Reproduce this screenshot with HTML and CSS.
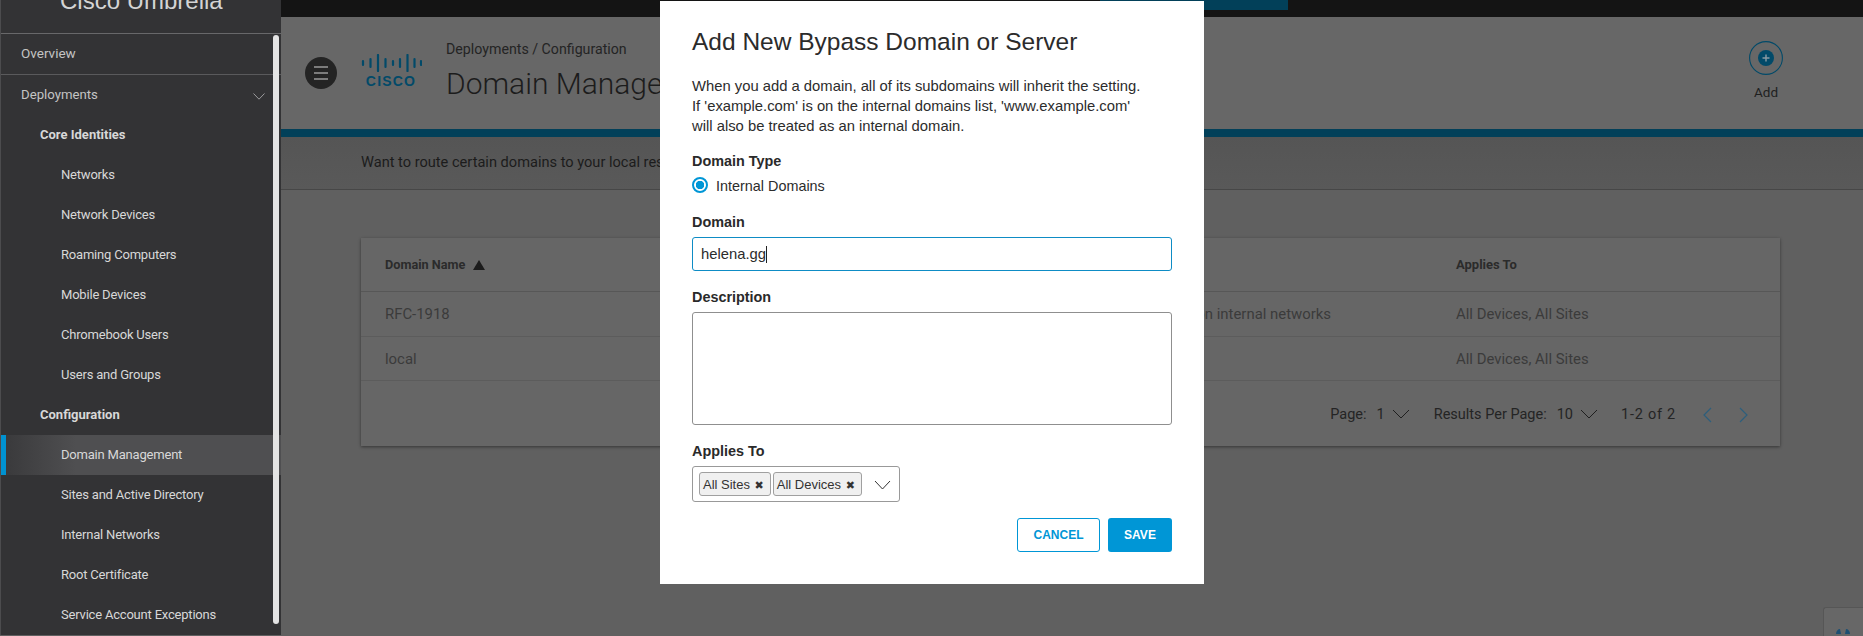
FILE: index.html
```html
<!DOCTYPE html>
<html lang="en">
<head>
<meta charset="utf-8">
<title>Domain Management</title>
<link rel="stylesheet" href="styles.css">
</head>
<body>
<div class="app">
  <aside class="sidebar">
    <div class="brand"><span>Cisco Umbrella</span></div>
    <div class="nav-top">Overview</div>
    <div class="nav-group">
      <span>Deployments</span>
      <svg class="nav-chev" width="12" height="7" viewBox="0 0 12 7"><path d="M.5.5L6 6.200 11.500.5" fill="none" stroke="#9a9a9c" stroke-width="1"/></svg>
    </div>
    <div class="nav-head">Core Identities</div>
    <div class="nav-item">Networks</div>
    <div class="nav-item">Network Devices</div>
    <div class="nav-item">Roaming Computers</div>
    <div class="nav-item">Mobile Devices</div>
    <div class="nav-item">Chromebook Users</div>
    <div class="nav-item">Users and Groups</div>
    <div class="nav-head">Configuration</div>
    <div class="nav-item active">Domain Management</div>
    <div class="nav-item">Sites and Active Directory</div>
    <div class="nav-item">Internal Networks</div>
    <div class="nav-item">Root Certificate</div>
    <div class="nav-item">Service Account Exceptions</div>
    <div class="scrollbar"></div>
  </aside>
  <main class="main">
    <div class="topbar"></div>
    <header class="header">
      <div class="burger"><i></i><i></i><i></i></div>
      <div class="logo">
        <svg width="61" height="18" viewBox="0 0 61 18">
          <g stroke="#024a69" stroke-width="2.200" stroke-linecap="round">
            <path d="M2 7v4M9.500 5v8M17 1v16M24.500 5v8M32 7v4M39 5v8M46.500 1v16M53.500 5v8M60 7v4"/>
          </g>
        </svg>
        <span class="logo-text">CISCO</span>
      </div>
      <div class="titles">
        <div class="crumb">Deployments / Configuration</div>
        <h1 class="title">Domain Management</h1>
      </div>
      <div class="add">
        <svg width="34" height="34" viewBox="0 0 34 34">
          <circle cx="17" cy="17" r="16.400" fill="none" stroke="#024a69" stroke-width="1.100"/>
          <circle cx="17" cy="17" r="8" fill="#024a69"/>
          <path d="M17 13.500v7M13.500 17h7" stroke="#8a9aa3" stroke-width="1.400"/>
        </svg>
        <span>Add</span>
      </div>
    </header>
    <div class="bluebar"></div>
    <div class="subheader"><span class="subheader-text">Want to route certain domains to your local resolver</span></div>
    <section class="content">
      <div class="card">
        <div class="row row-head">
          <div class="cell-name">Domain Name <span class="sort"></span></div>
          <div class="cell-desc"></div>
          <div>Applies To</div>
        </div>
        <div class="row row-one">
          <div class="cell-name">RFC-1918</div>
          <div class="cell-desc">on internal networks</div>
          <div>All Devices, All Sites</div>
        </div>
        <div class="row row-two">
          <div class="cell-name">local</div>
          <div class="cell-desc"></div>
          <div>All Devices, All Sites</div>
        </div>
        <div class="pager">
          <span>Page:</span><span class="pg-val">1</span>
          <svg class="pg-chev" width="18" height="10" viewBox="0 0 18 10"><path d="M1 1l8 8 8-8" fill="none" stroke="#1f1f1f" stroke-width="1"/></svg>
          <span class="pg-gap">Results Per Page:</span><span class="pg-val">10</span>
          <svg class="pg-chev" width="18" height="10" viewBox="0 0 18 10"><path d="M1 1l8 8 8-8" fill="none" stroke="#1f1f1f" stroke-width="1"/></svg>
          <span class="pg-count">1-2 of 2</span>
          <svg class="pg-prev" width="9" height="16" viewBox="0 0 9 16"><path d="M8 1L1 8l7 7" fill="none" stroke="#2d5f7d" stroke-width="1.200"/></svg>
          <svg class="pg-next" width="9" height="16" viewBox="0 0 9 16"><path d="M1 1l7 7-7 7" fill="none" stroke="#2d5f7d" stroke-width="1.200"/></svg>
        </div>
      </div>
    </section>
  </main>
</div>

<div class="top-tab"></div>
<div class="widget">
  <svg width="16" height="7" viewBox="0 0 16 7"><path d="M1 6c0-3 2-5 4-5l1 5zM15 6c0-3-2-5-4-5l-1 5z" fill="#1c4f73"/></svg>
</div>

<div class="modal">
  <h2 class="m-title">Add New Bypass Domain or Server</h2>
  <p class="m-text">When you add a domain, all of its subdomains will inherit the setting.<br>If 'example.com' is on the internal domains list, 'www.example.com'<br>will also be treated as an internal domain.</p>
  <div class="m-label l-type">Domain Type</div>
  <div class="radio"><span class="radio-dot"></span><span class="radio-text">Internal Domains</span></div>
  <div class="m-label l-domain">Domain</div>
  <div class="input"><span>helena.gg</span><span class="caret"></span></div>
  <div class="m-label l-desc">Description</div>
  <div class="textarea"></div>
  <div class="m-label l-applies">Applies To</div>
  <div class="select">
    <span class="tag">All Sites <b>✖</b></span>
    <span class="tag">All Devices <b>✖</b></span>
    <svg class="sel-chev" width="17" height="10" viewBox="0 0 17 10"><path d="M1 1l7.500 8L16 1" fill="none" stroke="#333" stroke-width="1"/></svg>
  </div>
  <div class="actions">
    <span class="btn btn-ghost">CANCEL</span>
    <span class="btn btn-solid">SAVE</span>
  </div>
</div>
</body>
</html>
```
FILE: styles.css
```css
* { box-sizing: border-box; }
html, body { margin: 0; height: 100%; overflow: hidden; background: #606060; }
body { font-family: Roboto, "Liberation Sans", sans-serif; font-size: 14px; color: #1f1f1f; }
.app { display: flex; height: 636px; }

.sidebar {
  position: relative;
  width: 281px;
  height: 635px;
  flex: none;
  background: #333335;
  border-left: 1px solid #4c4c4e;
  color: #d8d8d8;
  font-size: 13.500px;
  overflow: hidden;
}
.brand { height: 34px; border-bottom: 1px solid #68686a; position: relative; }
.brand span { position: absolute; left: 59px; top: -13px; font-size: 24px; font-weight: 300; line-height: 28px; color: #d4d4d4; font-family: "Liberation Sans", sans-serif; white-space: nowrap; }
.nav-top { height: 41px; line-height: 39px; padding-left: 20px; border-bottom: 1px solid #5a5a5c; color: #c4c4c4; }
.nav-group { height: 40px; padding: 0 16px 2px 20px; display: flex; align-items: center; justify-content: space-between; color: #c4c4c4; font-size: 13.200px; }
.nav-chev { margin-top: 5px; }
.nav-head { height: 40px; line-height: 39px; padding-left: 39px; font-weight: 700; font-size: 13px; color: #d8d8d8; }
.nav-item { height: 40px; line-height: 39px; padding-left: 60px; font-size: 13px; letter-spacing: -.2px; }
.nav-item.active {
  background: linear-gradient(90deg, #3a3a3c 0, #4f4f51 70px);
  border-left: 5px solid #0092d1;
  padding-left: 55px;
}
.scrollbar { position: absolute; left: 272px; top: 35px; width: 6px; height: 589px; background: #e4e4e4; border-radius: 3px; }

.main { flex: 1; min-width: 0; display: flex; flex-direction: column; }
.topbar { height: 17px; background: #141414; flex: none; }
.header { height: 112px; flex: none; background: #676767; display: flex; align-items: center; padding: 0 80px 0 24px; }
.burger { width: 32px; height: 32px; border-radius: 50%; background: #242424; display: flex; flex-direction: column; align-items: center; justify-content: center; gap: 4px; flex: none; }
.burger i { display: block; width: 14px; height: 2px; background: #7c7c7c; }
.logo { margin-left: 23px; width: 62px; display: flex; flex-direction: column; align-items: center; flex: none; margin-top: -5px; }
.logo-text { font-family: "Liberation Sans", sans-serif; font-weight: 700; font-size: 14px; line-height: 14px; letter-spacing: 1.200px; color: #024a69; margin-top: 2px; }
.titles { margin-left: 24px; margin-top: -3px; }
.crumb { font-size: 14.200px; line-height: 18px; color: #242424; }
.title { margin: 7px 0 0; font-size: 30px; line-height: 38px; font-weight: 300; color: #1c1c1c; white-space: nowrap; }
.add { margin-left: auto; width: 34px; display: flex; flex-direction: column; align-items: center; margin-top: -6px; font-size: 13.500px; color: #1f1f1f; }
.add span { margin-top: 9px; line-height: 16px; }
.bluebar { height: 8px; flex: none; background: #024059; }
.subheader { height: 53px; flex: none; padding: 0 0 0 80px; line-height: 50px; font-size: 14.600px; color: #1c1c1c; background: linear-gradient(#555 0, #595959 100%); border-bottom: 1px solid #474747; }
.subheader-text { display: block; width: 299px; white-space: nowrap; overflow: hidden; }
.content { padding: 48px 83px 0 80px; }
.card { background: #666; box-shadow: 0 1px 3px rgba(0,0,0,.45); }
.row { display: grid; grid-template-columns: 770px 325px 324px; align-items: center; border-bottom: 1px solid #5c5c5c; color: #3b3b3b; font-size: 14.900px; padding-top: 1px; }
.row-head { height: 54px; font-weight: 700; font-size: 13px; color: #2b2b2b; border-color: #575757; padding-top: 0; }
.row-head .cell-name { font-size: 12.700px; }
.row-one { height: 45px; padding-top: 0; }
.row-two { height: 44px; }
.cell-name { padding-left: 24px; }
.cell-desc { padding-right: 125px; white-space: nowrap; display: flex; justify-content: flex-end; }
.sort { display: inline-block; width: 0; height: 0; margin-left: 4px; border: 6px solid transparent; border-top: 0; border-bottom: 10px solid #1c1c1c; vertical-align: -1px; }
.pager { height: 65px; display: flex; align-items: center; justify-content: flex-end; padding: 2px 32px 0 0; color: #242424; font-size: 14.500px; }
.pg-val { margin-left: 10px; }
.pg-chev { margin: -2px 0 0 7px; }
.pg-gap { margin-left: 24px; }
.pg-count { margin-left: 23px; letter-spacing: .75px; }
.pg-prev { margin-left: 27px; }
.pg-next { margin-left: 27px; }

.top-tab { position: absolute; left: 1100px; top: 0; width: 188px; height: 10px; background: #024059; }
.widget { position: absolute; right: 0; top: 607px; width: 40px; height: 29px; background: #676767; border: 1px solid #565656; border-right: 0; border-bottom: 0; border-radius: 3px 0 0 0; padding: 20px 0 0 11px; display: flex; }

.modal {
  position: absolute;
  left: 660px;
  top: 1px;
  width: 544px;
  height: 583px;
  background: #fff;
  padding: 0 32px;
  font-family: "Liberation Sans", Arial, sans-serif;
  font-size: 14.400px;
  color: #2c2c2c;
}
.m-title { margin: 26px 0 0; font-size: 24.500px; line-height: 30px; font-weight: 400; color: #2b2b2b; }
.m-text { margin: 19px 0 0; line-height: 20px; font-size: 14.800px; }
.m-label { font-weight: 700; line-height: 16px; color: #2a2a2a; }
.l-type { margin-top: 17px; }
.radio { display: flex; align-items: center; margin-top: 8px; height: 16px; }
.radio-text { margin-top: 2px; }
.radio-dot { width: 16px; height: 16px; border-radius: 50%; border: 2px solid #0096d6; background: radial-gradient(circle, #0096d6 0, #0096d6 4px, #fff 4.500px); margin-right: 8px; flex: none; }
.l-domain { margin-top: 21px; }
.input { margin-top: 7px; height: 34px; border: 1px solid #0e8cc5; border-radius: 3px; padding-left: 8px; display: flex; align-items: center; font-size: 14.800px; }
.caret { width: 1px; height: 17px; background: #222; }
.l-desc { margin-top: 18px; }
.textarea { margin-top: 7px; height: 113px; border: 1px solid #8f8f8f; border-radius: 3px; }
.l-applies { margin-top: 18px; }
.select { margin-top: 7px; width: 208px; height: 36px; border: 1px solid #999; border-radius: 3px; display: flex; align-items: center; padding-left: 6px; gap: 2px; position: relative; }
.tag { height: 24px; padding: 0 6px 0 3px; border: 1px solid #a0a0a0; border-radius: 3px; background: #f0f0f0; font-size: 13px; line-height: 23px; color: #333; white-space: nowrap; }
.tag b { font-size: 11px; font-weight: 700; margin-left: 1px; font-family: "DejaVu Sans", sans-serif; }
.sel-chev { position: absolute; right: 8px; top: 13px; }
.actions { display: flex; justify-content: flex-end; gap: 8px; margin-top: 16px; }
.btn { height: 34px; border-radius: 3px; font-size: 12px; font-weight: 700; display: flex; align-items: center; justify-content: center; }
.btn-ghost { width: 83px; border: 1px solid #0096d6; color: #0096d6; }
.btn-solid { width: 64px; background: #0096d6; color: #fff; }
```
